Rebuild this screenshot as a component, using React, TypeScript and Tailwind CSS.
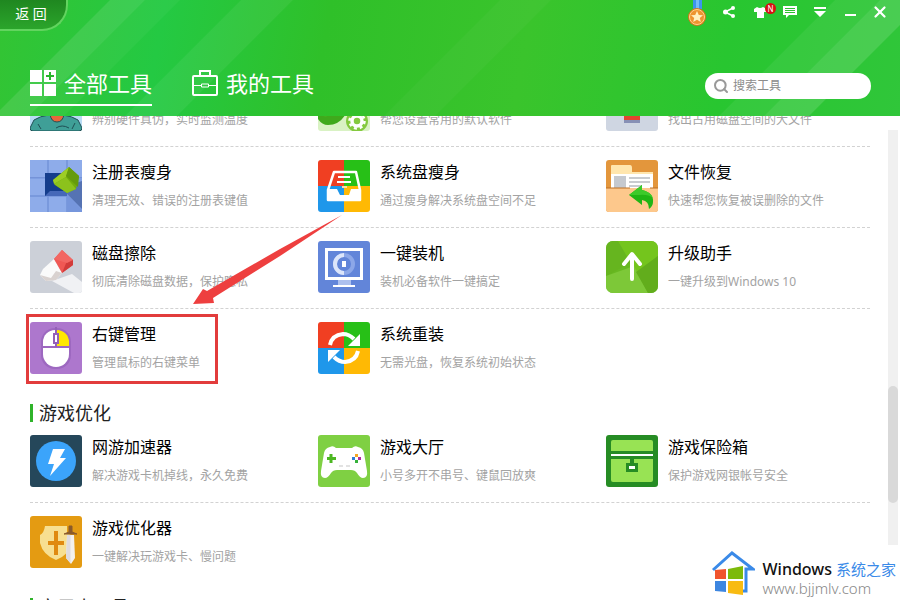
import type { ReactNode } from 'react';
import { Search, X } from 'lucide-react';

type Tool = {
    name?: string;
    desc: string;
    icon: ReactNode;
    marked?: boolean;
};

function Tile({ bg, radius = 3, children }: { bg: string; radius?: number; children: ReactNode }) {
    return (
        <svg viewBox="0 0 52 52" className="h-[52px] w-[52px] shrink-0 overflow-hidden" aria-hidden="true">
            <rect width="52" height="52" rx={radius} fill={bg} />
            {children}
        </svg>
    );
}

function FourColors() {
    return (
        <>
            <path d="M3 0H26V26H0V3A3 3 0 0 1 3 0Z" fill="#f03f22" />
            <path d="M26 0H49A3 3 0 0 1 52 3V26H26Z" fill="#27c017" />
            <path d="M0 26H26V52H3A3 3 0 0 1 0 49Z" fill="#1f97ea" />
            <path d="M26 26H52V49A3 3 0 0 1 49 52H26Z" fill="#ffb904" />
        </>
    );
}

const hardwareIcon = (
    <Tile bg="#b9dcf5">
        <path d="M0 49L4 41Q10 37 19 36H33Q42 37 48 41L52 49Q52 52 49 52H3Q0 52 0 49Z" fill="#3f9f97" stroke="#1f4f55" />
        <path d="M20 35H34Q33 43 27 43T20 35Z" fill="#e8663c" stroke="#1f4f55" />
        <path d="M26 49Q32 45 39 49M8 45L11 50M45 44L42 50" fill="none" stroke="#1f4f55" />
    </Tile>
);

const defaultSoftIcon = (
    <Tile bg="#d9f2c4">
        <path d="M0 40V30H30Q24 46 10 46Q4 46 0 40Z" fill="#3fa91c" />
        <path d="M0 36V30H22Q14 40 0 36Z" fill="#5cc42a" />
        <circle cx="39" cy="42" r="11" fill="#84c93f" />
        <circle cx="39" cy="42" r="5" fill="none" stroke="#fff" strokeWidth="3.5" />
        <circle cx="39" cy="42" r="7.5" fill="none" stroke="#fff" strokeWidth="2.5" strokeDasharray="3 2.9" />
    </Tile>
);

const bigFileIcon = (
    <Tile bg="#cfd6e2">
        <path d="M18 30H34V43H18Z" fill="#e2442f" />
        <path d="M18 41H34V44H18Z" fill="#8790b5" />
    </Tile>
);

const registryIcon = (
    <Tile bg="#7f9fe2">
        <path d="M0 0H17V17H0ZM19 0H36V17H19ZM38 0H52V17H38ZM0 19H15V35H0ZM0 37H17V52H0ZM19 37H36V52H19Z" fill="#8eacea" />
        <path d="M0 17.500H52M0 36H40M18 0V52M37 0V52" stroke="#7593d8" fill="none" />
        <path d="M37 26L52 21V49L37 34Z" fill="#5573b3" />
        <path d="M37 34L52 50V52H37Z" fill="#7696dc" />
        <path d="M15 13H37V36H15Z" fill="#143d8c" />
        <path d="M15 36L20 31H37V36Z" fill="#4568b8" />
        <path d="M23 20L39 7L49 16L46 29L37 33L25 25Z" fill="#72ad0c" />
        <path d="M23 20L39 7L36 17L24 24Z" fill="#9dce25" />
        <path d="M36 16L39 7L49 16L48 27Z" fill="#659b0b" />
        <path d="M24 24L36 17L46 29L37 33Z" fill="#8cc21c" />
    </Tile>
);

const diskSlimIcon = (
    <Tile bg="#fff">
        <FourColors />
        <path d="M16 12H38L42 30V40H10V30Z" fill="none" stroke="#fff" strokeWidth="2.5" strokeLinejoin="round" />
        <path d="M10 29H19L22 35H31L33 29H42V40H10Z" fill="#fff" />
        <path d="M20 17H32M19 22H33" stroke="#fff" strokeWidth="2" />
        <path d="M24 27H29" stroke="#ffe0a0" strokeWidth="2" />
    </Tile>
);

const restoreIcon = (
    <Tile bg="#e3963c">
        <path d="M5 28V6Q5 5 6 5H24Q26 5 26 8V12H47V28Z" fill="#ffe6ae" />
        <path d="M5 14H47V28H5Z" fill="#fff" />
        <path d="M8 16H20V28H8Z" fill="#c5c9cf" />
        <path d="M23 18H44M23 22H44M23 26H36" stroke="#c9ccd0" strokeWidth="2" />
        <path d="M0 28H52V49A3 3 0 0 1 49 52H3A3 3 0 0 1 0 49Z" fill="#fdc88c" />
        <path d="M0 28H24M44 28H52" stroke="#bd6f22" />
        <path d="M23 35L36 25V30Q48 33 47 42Q47 46 43 49Q43 41 36 40V45Z" fill="#20b514" />
        <path d="M23 35L36 25V30Q45 32 47 38Q42 34 33 35Z" fill="#3dca2a" />
    </Tile>
);

const eraserIcon = (
    <Tile bg="#ccd0d8">
        <path d="M22 40L42 33L52 41V49A3 3 0 0 1 49 52H44Z" fill="#f0f1f4" />
        <path d="M10 34L13 28L24 18L32 32L26 39L16 40Z" fill="#fafafa" />
        <path d="M10 34L21 37L26 30L32 32L26 39L16 40Z" fill="#d9d2d0" />
        <path d="M24 18L32 9L43 19V24L32 32Z" fill="#f05854" />
        <path d="M32 32L37 20L43 19V24Z" fill="#d23b3a" />
        <path d="M24 18L32 9L43 19L37 22Z" fill="#f26763" />
    </Tile>
);

const installIcon = (
    <Tile bg="#6285d9">
        <path d="M8.500 8.500H43.500V37.500H8.500Z" fill="none" stroke="#fff" strokeWidth="3" />
        <path d="M20 39H33V44H20Z" fill="#adc0ee" />
        <path d="M15 45H37" stroke="#fff" strokeWidth="2" />
        <circle cx="26" cy="23" r="9" fill="none" stroke="#8ca7e8" strokeWidth="4" />
        <path d="M26 14A9 9 0 0 0 17 23A9 9 0 0 0 26 32" fill="none" stroke="#dce5fa" strokeWidth="4" />
        <path d="M24 20H28V26H24Z" fill="#fff" />
    </Tile>
);

const upgradeIcon = (
    <Tile bg="#68b922" radius={7}>
        <path d="M0 7A7 7 0 0 1 7 0H12L24 22L0 35Z" fill="#66b51f" />
        <path d="M12 0H45A7 7 0 0 1 52 7V15L31 32Z" fill="#74c51d" />
        <path d="M0 35L28 25L42 52H7A7 7 0 0 1 0 45Z" fill="#7dc838" />
        <path d="M52 15V45A7 7 0 0 1 45 52H42L30 31Z" fill="#62ad1c" />
        <path d="M26 38V14M18 23L26 13L34 23" fill="none" stroke="#fff" strokeWidth="4" strokeLinecap="round" strokeLinejoin="round" />
    </Tile>
);

const mouseIcon = (
    <Tile bg="#ad77cd">
        <rect x="11" y="6" width="30" height="41" rx="14" fill="#9d68c0" />
        <path d="M13 24V20A12 12 0 0 1 25 8H26V24Z" fill="#fff" />
        <path d="M26 24V8H27A12 12 0 0 1 39 20V24Z" fill="#ffe800" />
        <path d="M13 26H39V32A13 13 0 0 1 13 32Z" fill="#fff" />
        <path d="M26 5V25" stroke="#9560b8" strokeWidth="2" />
        <rect x="24" y="12" width="4" height="9" fill="#fff" stroke="#9560b8" strokeWidth="2" />
    </Tile>
);

const reinstallIcon = (
    <Tile bg="#fff">
        <FourColors />
        <path d="M12 23Q14 13 25 12Q31 12 36 17" fill="none" stroke="#fff" strokeWidth="4" />
        <path d="M42 12V24H30Z" fill="#fff" />
        <path d="M40 29Q38 39 27 40Q21 40 16 35" fill="none" stroke="#fff" strokeWidth="4" />
        <path d="M10 40V28H22Z" fill="#fff" />
    </Tile>
);

const acceleratorIcon = (
    <Tile bg="#25475a">
        <circle cx="26" cy="26" r="20" fill="#3ba4fb" />
        <path d="M23 14H35L30 23H36L20 41L24 29H18Z" fill="#fff" />
    </Tile>
);

const gamepadIcon = (
    <Tile bg="#7fd043">
        <path d="M12 12Q15 10 18 13H34Q37 10 40 12Q45 13 46 18L49 36Q50 43 45 43Q42 43 39 38Q37 35 33 35H19Q15 35 13 38Q10 43 7 43Q2 43 3 36L6 18Q7 13 12 12Z" fill="#fff" />
        <path d="M13 19V28M9 23.500H18" stroke="#4db722" strokeWidth="3" />
        <path d="M37 19H40V22H37Z" fill="#f5a623" />
        <path d="M37 25H40V28H37Z" fill="#35b23a" />
        <path d="M34 22H37V25H34Z" fill="#2f7cd6" />
        <path d="M40 22H43V25H40Z" fill="#b02b9c" />
        <path d="M21 31H25M28 31H32" stroke="#c5c5c5" />
    </Tile>
);

const safeIcon = (
    <Tile bg="#268c24">
        <path d="M5 16V7Q5 5 7 5H45Q47 5 47 7V16Z" fill="#98e354" />
        <path d="M5 19H47V21H5Z" fill="#fff" />
        <path d="M5 24H47V45Q47 47 45 47H7Q5 47 5 45Z" fill="#98e354" />
        <path d="M24 23H28V29H24ZM20 28H32V37H20Z" fill="#268c24" />
        <path d="M23 31H29V34H23Z" fill="#fff" />
    </Tile>
);

const shieldIcon = (
    <Tile bg="#e49b12">
        <path d="M15 10H37V16Q38 18 41 19V27Q38 40 26 44Q13 39 10 27V19Q14 17 15 10Z" fill="#f7df91" />
        <path d="M26 15V39M18 27H34" stroke="#e08a10" strokeWidth="4" />
        <path d="M37 19H44L45 42L41 48L36 42Z" fill="#f3f1ee" />
        <path d="M40.500 19V47L36 42L37 19Z" fill="#dedbe0" />
        <path d="M39 10H42V16L47 18H34L39 16Z" fill="#8a5a2b" stroke="#8a5a2b" />
    </Tile>
);

const systemRows: Tool[][] = [
    [
        { desc: '辨别硬件真伪，实时监测温度', icon: hardwareIcon },
        { desc: '帮您设置常用的默认软件', icon: defaultSoftIcon },
        { desc: '找出占用磁盘空间的大文件', icon: bigFileIcon },
    ],
    [
        { name: '注册表瘦身', desc: '清理无效、错误的注册表键值', icon: registryIcon },
        { name: '系统盘瘦身', desc: '通过瘦身解决系统盘空间不足', icon: diskSlimIcon },
        { name: '文件恢复', desc: '快速帮您恢复被误删除的文件', icon: restoreIcon },
    ],
    [
        { name: '磁盘擦除', desc: '彻底清除磁盘数据，保护隐私', icon: eraserIcon },
        { name: '一键装机', desc: '装机必备软件一键搞定', icon: installIcon },
        { name: '升级助手', desc: '一键升级到Windows 10', icon: upgradeIcon },
    ],
    [
        { name: '右键管理', desc: '管理鼠标的右键菜单', icon: mouseIcon, marked: true },
        { name: '系统重装', desc: '无需光盘，恢复系统初始状态', icon: reinstallIcon },
    ],
];

const gameRows: Tool[][] = [
    [
        { name: '网游加速器', desc: '解决游戏卡机掉线，永久免费', icon: acceleratorIcon },
        { name: '游戏大厅', desc: '小号多开不串号、键鼠回放爽', icon: gamepadIcon },
        { name: '游戏保险箱', desc: '保护游戏网银帐号安全', icon: safeIcon },
    ],
    [{ name: '游戏优化器', desc: '一键解决玩游戏卡、慢问题', icon: shieldIcon }],
];

function Marker() {
    return (
        <>
            <span className="pointer-events-none absolute -top-2 -left-1 h-[70px] w-48 border-3 border-[#e23c3c]" />
            <svg viewBox="0 0 156 96" className="pointer-events-none absolute -top-28 left-40 h-24 w-[156px]" aria-hidden="true">
                <path d="M152 5L90 46L23 88L24 93L3 94L13 79L17 81L90 39Z" fill="#ee3f3f" />
            </svg>
        </>
    );
}

function ToolItem({ tool }: { tool: Tool }) {
    return (
        <a href="#" className="relative flex gap-2.5 whitespace-nowrap">
            {tool.icon}
            <span className="flex flex-col justify-between">
                <span className="text-base leading-6 text-black">{tool.name}</span>
                <span className="text-xs leading-[22px] text-[#a3a3a3]">{tool.desc}</span>
            </span>
            {tool.marked && <Marker />}
        </a>
    );
}

function ToolRows({ rows }: { rows: Tool[][] }) {
    return (
        <div className="divide-y divide-dashed divide-[#d2d2d2]">
            {rows.map((row, i) => (
                <div key={i} className="grid grid-cols-3 gap-6 pt-[13px] pb-[15px]">
                    {row.map((tool) => (
                        <ToolItem key={tool.desc} tool={tool} />
                    ))}
                </div>
            ))}
        </div>
    );
}

function SectionTitle({ children }: { children: ReactNode }) {
    return (
        <h2 className="mt-[15px] flex h-[18px] items-center gap-1.5 text-lg leading-none text-[#222]">
            <span className="h-full w-[3px] bg-[#2fb32a]" />
            {children}
        </h2>
    );
}

function HeaderGlow() {
    return (
        <svg viewBox="0 0 900 116" preserveAspectRatio="none" className="absolute inset-0 h-full w-full" aria-hidden="true">
            <path d="M110 0H145L29 116H0V110Z" fill="#fff" opacity="0.1" />
            <path d="M145 0H180L64 116H29Z" fill="#fff" opacity="0.04" />
            <path d="M241 0H293L177 116H125Z" fill="#fff" opacity="0.06" />
            <path d="M500 0H551L435 116H384Z" fill="#fff" opacity="0.03" />
            <path d="M835 0H880L764 116H719Z" fill="#fff" opacity="0.06" />
            <path d="M880 0H900V25L809 116H764Z" fill="#fff" opacity="0.13" />
        </svg>
    );
}

function WindowButton({ label, children }: { label: string; children: ReactNode }) {
    return (
        <button type="button" aria-label={label} className="flex h-6 w-[30px] items-center justify-center">
            {children}
        </button>
    );
}

function WindowControls() {
    return (
        <div className="mr-[5px] flex">
            <button type="button" aria-label="勋章" className="flex w-9 justify-center">
                <svg viewBox="0 0 20 28" className="h-7 w-5" aria-hidden="true">
                    <path d="M6 0H15V9H6Z" fill="#3c94ee" />
                    <path d="M9 0H12V9H9Z" fill="#74bbfa" />
                    <circle cx="10" cy="17" r="9" fill="#d9741c" />
                    <circle cx="10" cy="17" r="7.5" fill="#ee9430" stroke="#ffd78c" />
                    <path d="M10 11L11.800 15L16 15.300L12.800 18L13.800 22L10 19.800L6.200 22L7.200 18L4 15.300L8.200 15Z" fill="#fff0c0" />
                </svg>
            </button>
            <WindowButton label="分享">
                <svg viewBox="0 0 14 14" className="h-3.5 w-3.5" aria-hidden="true">
                    <path d="M10 3L2 7L10 11" fill="none" stroke="#fff" strokeWidth="1.5" />
                    <circle cx="2.5" cy="7" r="2.5" fill="#fff" />
                    <circle cx="10" cy="3" r="2" fill="#fff" />
                    <circle cx="10" cy="11" r="2" fill="#fff" />
                </svg>
            </WindowButton>
            <WindowButton label="皮肤">
                <span className="relative">
                    <svg viewBox="0 0 14 14" className="h-3.5 w-3.5" aria-hidden="true">
                        <path d="M4 2Q7 4 10 2L14 4V7H11V13H4V7H1V4Z" fill="#fff" />
                    </svg>
                    <span className="absolute -top-0.5 left-3 flex h-[11px] w-[11px] items-center justify-center rounded-full bg-[#d80f12] text-[8px] leading-none text-white">
                        N
                    </span>
                </span>
            </WindowButton>
            <WindowButton label="反馈">
                <svg viewBox="0 0 14 12" className="h-3 w-3.5" aria-hidden="true">
                    <path d="M0 0H14V9H6L3 12V9H0Z" fill="#fff" />
                    <path d="M2 2.500H12M2 4.500H12M2 6.500H12" stroke="#2fc130" />
                </svg>
            </WindowButton>
            <WindowButton label="菜单">
                <svg viewBox="0 0 12 10" className="h-2.5 w-3" aria-hidden="true">
                    <path d="M0 0H12V2H0ZM0 4H12L6 10Z" fill="#fff" />
                </svg>
            </WindowButton>
            <WindowButton label="最小化">
                <span className="mt-1.5 h-0.5 w-[11px] bg-white" />
            </WindowButton>
            <WindowButton label="关闭">
                <X className="h-[18px] w-[18px] text-white" strokeWidth={3} />
            </WindowButton>
        </div>
    );
}

function Header() {
    return (
        <header className="relative h-[116px] shrink-0 bg-[linear-gradient(100deg,#33c433_0%,#24c943_18%,#2fc029_36%,#3ac42c_58%,#28c630_80%,#30c63a_100%)] text-white">
            <HeaderGlow />
            <div className="relative flex h-full flex-col justify-between">
                <div className="flex items-start justify-between">
                    <button
                        type="button"
                        className="h-[31px] w-[68px] rounded-br-[26px] border-r-2 border-b-2 border-[#62d45f] bg-linear-to-b from-[#1f8720] to-[#2ba52b] pr-1 pb-0.5 text-sm leading-none"
                    >
                        返 回
                    </button>
                    <WindowControls />
                </div>
                <div className="flex items-end justify-between pr-[29px] pb-2.5 pl-[30px]">
                    <nav className="flex gap-10 text-[22px] leading-8">
                        <button type="button" className="flex items-center gap-2 border-b-2 border-white pb-[5px]">
                            <svg viewBox="0 0 26 26" className="h-[26px] w-[26px]" aria-hidden="true">
                                <path d="M0 0H12V12H0ZM14 0H26V12H14ZM0 14H12V26H0ZM14 14H26V26H14Z" fill="#fff" />
                                <path d="M20 2V10M16 6H24" stroke="#29b52c" strokeWidth="2" />
                            </svg>
                            全部工具
                        </button>
                        <button type="button" className="flex items-center gap-2 border-b-2 border-transparent pb-[5px]">
                            <svg viewBox="0 0 26 26" className="h-[26px] w-[26px]" fill="none" stroke="#fff" aria-hidden="true">
                                <rect x="1" y="6" width="24" height="19" rx="1" strokeWidth="2" />
                                <path d="M8 6V1H18V6" strokeWidth="2" />
                                <path d="M2 15.500H9M17 15.500H25M9.500 14H16.500V17H9.500Z" />
                            </svg>
                            我的工具
                        </button>
                    </nav>
                    <label className="mb-[7px] flex h-[26px] w-[166px] items-center gap-1 rounded-full bg-white pl-2">
                        <Search className="h-4 w-4 shrink-0 text-[#999]" strokeWidth={3} />
                        <input
                            type="search"
                            aria-label="搜索工具"
                            placeholder="搜索工具"
                            className="w-full min-w-0 bg-transparent text-xs text-[#333] outline-none placeholder:text-[#8c8c8c]"
                        />
                    </label>
                </div>
            </div>
        </header>
    );
}

function SiteBadge() {
    return (
        <div className="absolute right-0 bottom-0 flex h-[55px] items-center gap-2 bg-white pr-1 pl-2 whitespace-nowrap">
            <svg viewBox="0 0 44 46" className="h-[46px] w-11" aria-hidden="true">
                <path d="M2 20L21 3L42 19H35V41H29" fill="none" stroke="#3a8ae8" strokeWidth="3" />
                <path d="M4 20L15 19V29H4Z" fill="#f0542e" />
                <path d="M17 19L32 16V29H17Z" fill="#7cba0a" />
                <path d="M4 31H15V42L4 41Z" fill="#3d86e0" />
                <path d="M17 31H32V45L17 43Z" fill="#f8bb12" />
            </svg>
            <div className="pt-2.5">
                <p className="flex gap-1 text-[15px] leading-5 text-[#3a8ae8]">
                    <span className="text-base leading-5 font-medium text-[#111]">Windows</span>
                    系统之家
                </p>
                <p className="text-[15px] leading-[18px] font-light text-[#888]">www.bjjmlv.com</p>
            </div>
        </div>
    );
}

export default function App() {
    return (
        <div className="relative flex h-screen flex-col overflow-hidden bg-white font-['Noto_Sans','Noto_Sans_CJK_SC',sans-serif]">
            <Header />
            <div className="flex min-h-0 flex-1 overflow-hidden">
                <main className="-mt-[50px] min-w-0 flex-1 pr-[18px] pl-[30px]">
                    <ToolRows rows={systemRows} />
                    <SectionTitle>游戏优化</SectionTitle>
                    <ToolRows rows={gameRows} />
                    <SectionTitle>实用小工具</SectionTitle>
                </main>
                <div className="mt-3.5 mr-0.5 w-2.5 bg-[#f0f0f0] pt-64">
                    <div className="h-[117px] rounded-full bg-[#d9d9d9]" />
                </div>
            </div>
            <SiteBadge />
        </div>
    );
}
